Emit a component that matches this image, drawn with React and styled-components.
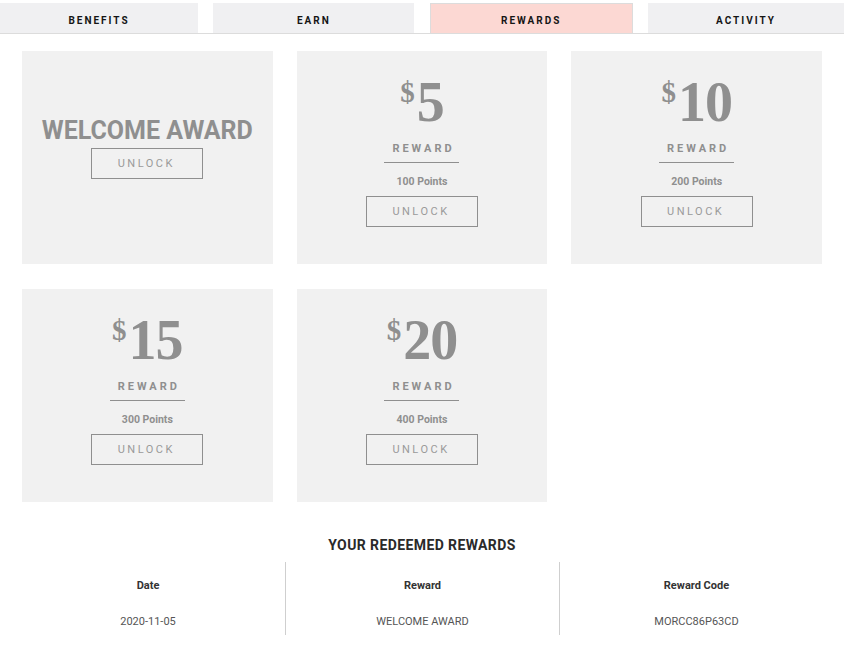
import React from "react";
import styled, { createGlobalStyle } from "styled-components";

const Global = createGlobalStyle`
  html, body { margin: 0; padding: 0; background: #fff; }
  body { font-family: Roboto, "Liberation Sans", Arial, sans-serif; }
  * { box-sizing: border-box; }
`;

const Page = styled.div`
  width: 844px;
`;

const TabBar = styled.div`
  display: flex;
  justify-content: space-between;
  padding-top: 3px;
  border-bottom: 1px solid #dcdcdc;
`;

const Tab = styled.div`
  width: ${(p) => p.$w}px;
  height: 30px;
  display: flex;
  align-items: center;
  justify-content: center;
  padding-top: 3px;
  font-size: 10px;
  font-weight: 700;
  letter-spacing: 2px;
  color: #151515;
  background: ${(p) => (p.$active ? "#fcd8d3" : "#f0f0f2")};
  border: 1px solid ${(p) => (p.$active ? "#dcdcdc" : "transparent")};
  border-bottom: none;
`;

const Grid = styled.div`
  display: grid;
  grid-template-columns: repeat(3, 1fr);
  column-gap: 24px;
  row-gap: 25px;
  padding: 0 22px;
  margin-top: 17px;
`;

const Card = styled.div`
  height: 213px;
  background: #f1f1f1;
  display: flex;
  flex-direction: column;
  align-items: center;
  justify-content: ${(p) => (p.$center ? "center" : "flex-start")};
  padding-top: ${(p) => (p.$center ? "0" : "23px")};
  padding-bottom: ${(p) => (p.$center ? "19px" : "0")};
  color: #8f8f8f;
`;

const Title = styled.div`
  font-size: 25px;
  font-weight: 700;
  line-height: 28px;
  color: #8f8f8f;
`;

const Amount = styled.div`
  display: flex;
  align-items: flex-start;
  justify-content: center;
  font-family: "Liberation Serif", "DejaVu Serif", serif;
  font-weight: 700;
  color: #8f8f8f;
`;

const Dollar = styled.span`
  font-size: 29px;
  line-height: 29px;
  margin-top: 4px;
  margin-right: 2px;
`;

const Number = styled.span`
  font-size: 56px;
  line-height: 56px;
  letter-spacing: -1px;
`;

const RewardLabel = styled.div`
  margin-top: 12px;
  width: 75px;
  text-align: center;
  font-size: 11px;
  line-height: 14px;
  font-weight: 700;
  letter-spacing: 3px;
  padding-left: 3px;
  padding-bottom: 6px;
  border-bottom: 1px solid #8f8f8f;
  color: #8f8f8f;
`;

const Points = styled.div`
  margin-top: 12px;
  font-size: 10.5px;
  line-height: 14px;
  font-weight: 700;
  color: #8f8f8f;
`;

const Unlock = styled.button`
  margin-top: ${(p) => p.$mt || "7px"};
  width: 112px;
  height: 31px;
  background: transparent;
  border: 1px solid #8f8f8f;
  font-family: Roboto, "Liberation Sans", Arial, sans-serif;
  font-size: 11px;
  letter-spacing: 2.5px;
  padding-left: 4px;
  color: #9a9a9a;
  cursor: pointer;
`;

const SectionTitle = styled.h2`
  margin: 33px 0 0;
  text-align: center;
  font-size: 14px;
  line-height: 20px;
  font-weight: 700;
  letter-spacing: 0.4px;
  color: #2a2a2a;
`;

const Table = styled.div`
  margin: 7px 11px 0;
  display: grid;
  grid-template-columns: repeat(3, 1fr);
`;

const Col = styled.div`
  display: flex;
  flex-direction: column;
  align-items: center;
  padding: 17px 0 6px;
  border-left: ${(p) => (p.$divider ? "1px solid #cfcfcf" : "none")};
`;

const Head = styled.div`
  font-size: 11px;
  line-height: 14px;
  font-weight: 700;
  color: #333;
`;

const Value = styled.div`
  margin-top: 22px;
  font-size: 11px;
  line-height: 14px;
  color: #555;
`;

const tabs = [
  { label: "BENEFITS", w: 198 },
  { label: "EARN", w: 201 },
  { label: "REWARDS", w: 203, active: true },
  { label: "ACTIVITY", w: 196 },
];

const rewards = [
  { amount: 5, points: 100 },
  { amount: 10, points: 200 },
  { amount: 15, points: 300 },
  { amount: 20, points: 400 },
];

export default function App() {
  return (
    <Page>
      <Global />
      <TabBar>
        {tabs.map((t) => (
          <Tab key={t.label} $w={t.w} $active={t.active}>
            {t.label}
          </Tab>
        ))}
      </TabBar>
      <Grid>
        <Card $center>
          <Title>WELCOME AWARD</Title>
          <Unlock $mt="3px">UNLOCK</Unlock>
        </Card>
        {rewards.map((r) => (
          <Card key={r.amount}>
            <Amount>
              <Dollar>$</Dollar>
              <Number>{r.amount}</Number>
            </Amount>
            <RewardLabel>REWARD</RewardLabel>
            <Points>{r.points} Points</Points>
            <Unlock>UNLOCK</Unlock>
          </Card>
        ))}
      </Grid>
      <SectionTitle>YOUR REDEEMED REWARDS</SectionTitle>
      <Table>
        <Col>
          <Head>Date</Head>
          <Value>2020-11-05</Value>
        </Col>
        <Col $divider>
          <Head>Reward</Head>
          <Value>WELCOME AWARD</Value>
        </Col>
        <Col $divider>
          <Head>Reward Code</Head>
          <Value>MORCC86P63CD</Value>
        </Col>
      </Table>
    </Page>
  );
}
